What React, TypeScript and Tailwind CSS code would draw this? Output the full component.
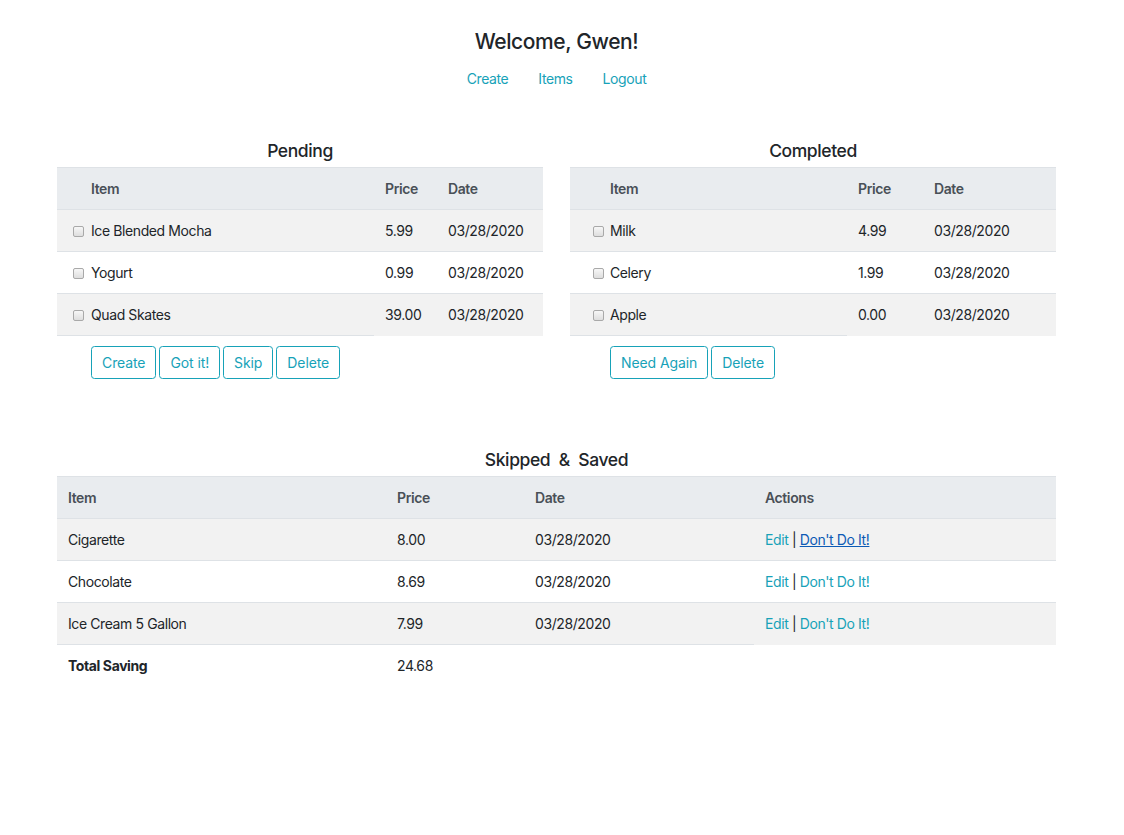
import React from "react";

const font = { fontFamily: "Inter, 'Noto Sans', 'Liberation Sans', sans-serif", letterSpacing: "-0.4px" };

function Check() {
  return (
    <span className="inline-block w-[11px] h-[11px] rounded-[2px] border border-[#a9a9a9] bg-gradient-to-b from-[#f7f7f7] to-[#dedede] align-middle" />
  );
}

function OutlineBtn({ children }: { children: React.ReactNode }) {
  return (
    <button className="h-[33px] px-[10px] border border-[#17a2b8] rounded-[3.5px] text-[#17a2b8] text-[14px] leading-[21px] tracking-[-0.1px] bg-white">
      {children}
    </button>
  );
}

type Row = { name: string; price: string; date: string };

function CheckTable({
  title,
  rows,
  widths,
  cbOffset,
  buttons,
}: {
  title: string;
  rows: Row[];
  widths: [number, number, number, number];
  cbOffset: number;
  buttons: string[];
}) {
  return (
    <div className="w-[486px]">
      <div className="text-center text-[17.5px] leading-[21px] font-medium text-[#212529] mb-[6px]">{title}</div>
      <table className="table-fixed border-collapse w-full text-[14px] text-[#212529]">
        <colgroup>
          <col style={{ width: widths[0] }} />
          <col style={{ width: widths[1] }} />
          <col style={{ width: widths[2] }} />
          <col style={{ width: widths[3] }} />
        </colgroup>
        <thead>
          <tr className="h-[42px] bg-[#e9ecef] border-t border-[#dee2e6] text-[#495057] font-semibold text-left">
            <th />
            <th className="font-semibold">Item</th>
            <th className="font-semibold pl-[11px]">Price</th>
            <th className="font-semibold pl-[11px]">Date</th>
          </tr>
        </thead>
        <tbody>
          {rows.map((r, i) => (
            <tr key={r.name} className={`h-[42px] border-t border-[#dee2e6] ${i % 2 === 0 ? "bg-[#f2f2f2]" : "bg-white"}`}>
              <td className="p-0">
                <span className="flex" style={{ paddingLeft: cbOffset }}>
                  <span className="relative top-[-1px]"><Check /></span>
                </span>
              </td>
              <td>{r.name}</td>
              <td className="pl-[11px]">{r.price}</td>
              <td className="pl-[11px]">{r.date}</td>
            </tr>
          ))}
          <tr>
            <td className="border-t border-[#dee2e6]" />
            <td className="border-t border-[#dee2e6] pt-[10px] pb-[10px]">
              <div className="flex gap-[3px]">
                {buttons.map((b) => (
                  <OutlineBtn key={b}>{b}</OutlineBtn>
                ))}
              </div>
            </td>
            <td />
            <td />
          </tr>
        </tbody>
      </table>
    </div>
  );
}

export default function App() {
  const pending: Row[] = [
    { name: "Ice Blended Mocha", price: "5.99", date: "03/28/2020" },
    { name: "Yogurt", price: "0.99", date: "03/28/2020" },
    { name: "Quad Skates", price: "39.00", date: "03/28/2020" },
  ];
  const completed: Row[] = [
    { name: "Milk", price: "4.99", date: "03/28/2020" },
    { name: "Celery", price: "1.99", date: "03/28/2020" },
    { name: "Apple", price: "0.00", date: "03/28/2020" },
  ];
  const skipped: Row[] = [
    { name: "Cigarette", price: "8.00", date: "03/28/2020" },
    { name: "Chocolate", price: "8.69", date: "03/28/2020" },
    { name: "Ice Cream 5 Gallon", price: "7.99", date: "03/28/2020" },
  ];
  return (
    <div className="min-h-[835px] bg-white" style={font}>
      <div className="ml-[57px] w-[999px] pt-[29px]">
        <h4 className="text-center text-[21px] leading-[26px] font-medium text-[#212529]">Welcome, Gwen!</h4>
        <nav className="flex justify-center mt-[13px] text-[14px] leading-[21px] text-[#17a2b8]">
          <a className="px-[15px]">Create</a>
          <a className="px-[15px]">Items</a>
          <a className="px-[15px]">Logout</a>
        </nav>
        <div className="flex gap-[27px] mt-[51px]">
          <CheckTable title="Pending" rows={pending} widths={[34, 283, 63, 106]} cbOffset={16} buttons={["Create", "Got it!", "Skip", "Delete"]} />
          <CheckTable title="Completed" rows={completed} widths={[40, 237, 76, 133]} cbOffset={23} buttons={["Need Again", "Delete"]} />
        </div>
        <div className="mt-[60px]">
          <div className="text-center text-[17.5px] leading-[21px] font-medium text-[#212529] mb-[6px] whitespace-pre">{"Skipped  &  Saved"}</div>
          <table className="table-fixed border-collapse w-full text-[14px] text-[#212529]">
            <colgroup>
              <col style={{ width: 329 }} />
              <col style={{ width: 138 }} />
              <col style={{ width: 230 }} />
              <col style={{ width: 302 }} />
            </colgroup>
            <thead>
              <tr className="h-[42px] bg-[#e9ecef] border-t border-[#dee2e6] text-[#495057] text-left">
                <th className="font-semibold pl-[11px]">Item</th>
                <th className="font-semibold pl-[11px]">Price</th>
                <th className="font-semibold pl-[11px]">Date</th>
                <th className="font-semibold pl-[11px]">Actions</th>
              </tr>
            </thead>
            <tbody>
              {skipped.map((r, i) => (
                <tr key={r.name} className={`h-[42px] border-t border-[#dee2e6] ${i % 2 === 0 ? "bg-[#f2f2f2]" : "bg-white"}`}>
                  <td className="pl-[11px]">{r.name}</td>
                  <td className="pl-[11px]">{r.price}</td>
                  <td className="pl-[11px]">{r.date}</td>
                  <td className="pl-[11px]">
                    <a className="text-[#17a2b8]">Edit</a>
                    <span> | </span>
                    {i === 0 ? (
                      <a className="text-[#0d5bb5] underline">Don't Do It!</a>
                    ) : (
                      <a className="text-[#17a2b8]">Don't Do It!</a>
                    )}
                  </td>
                </tr>
              ))}
              <tr className="h-[42px]">
                <td className="pl-[11px] font-bold border-t border-[#dee2e6]">Total Saving</td>
                <td className="pl-[11px] border-t border-[#dee2e6]">24.68</td>
                <td className="border-t border-[#dee2e6]" />
                <td />
              </tr>
            </tbody>
          </table>
        </div>
      </div>
    </div>
  );
}
